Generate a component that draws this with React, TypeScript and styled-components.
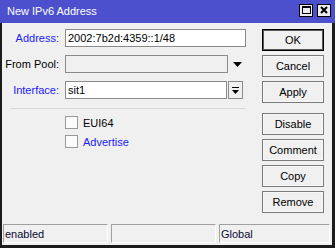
import styled, { createGlobalStyle } from 'styled-components';

const GlobalStyle = createGlobalStyle`
  html, body {
    margin: 0;
    padding: 0;
    background: #f0f0f0;
  }
  body {
    font-family: "Liberation Sans", Arial, sans-serif;
    font-size: 11px;
    color: #000;
  }
`;

const Window = styled.div`
  width: 335px;
  height: 248px;
  display: flex;
  flex-direction: column;
  background: #f0f0f0;
`;

const TitleBar = styled.div`
  height: 23px;
  flex: none;
  display: flex;
  align-items: center;
  padding: 0 4px 0 7px;
  box-sizing: border-box;
  background: #4c50cc;
  color: #fff;
  font-size: 11px;
`;

const Title = styled.span`
  flex: 1;
  margin-top: -1px;
`;

const TitleButtons = styled.div`
  display: flex;
  gap: 4px;
  margin-top: -3px;
`;

const TitleButton = styled.div`
  width: 14px;
  height: 13px;
  box-sizing: border-box;
  border: 1px solid #000;
  background: #ececec;
  display: flex;
  align-items: center;
  justify-content: center;
`;

const Frame = styled.div`
  flex: 1;
  display: flex;
  flex-direction: column;
  border: solid #1c1c1c;
  border-width: 0 3px 3px 2px;
  min-height: 0;
`;

const Body = styled.div`
  display: flex;
  gap: 16px;
  padding: 6px 8px 0 0;
`;

const Form = styled.div`
  width: 244px;
  display: flex;
  flex-direction: column;
  gap: 8px;
`;

const Row = styled.div`
  display: flex;
  align-items: center;
  height: 18px;
`;

const Label = styled.div<{ $blue?: boolean }>`
  width: 57px;
  margin-right: 6px;
  text-align: right;
  white-space: nowrap;
  color: ${(p) => (p.$blue ? '#1a1aff' : '#000')};
`;

const Field = styled.div<{ $disabled?: boolean; $width: number }>`
  width: ${(p) => p.$width}px;
  height: 18px;
  box-sizing: border-box;
  border: 1px solid #8a8a8a;
  background: ${(p) => (p.$disabled ? '#f0f0f0' : '#fff')};
  padding: 0 2px;
  display: flex;
  align-items: center;
  white-space: nowrap;
  overflow: hidden;
`;

const ArrowSlot = styled.div`
  width: 9px;
  margin-left: 5px;
  display: flex;
  align-items: center;
  justify-content: center;
`;

const SmallButton = styled.div`
  width: 15px;
  height: 18px;
  margin-left: 1px;
  box-sizing: border-box;
  border: 1px solid #8a8a8a;
  background: #f0f0f0;
  display: flex;
  align-items: center;
  justify-content: center;
`;

const Separator = styled.div`
  height: 1px;
  background: #d9d9d9;
  margin: 1px 0 0 8px;
`;

const Checks = styled.div`
  display: flex;
  flex-direction: column;
  gap: 6px;
  padding-left: 63px;
  margin-top: -1px;
`;

const CheckRow = styled.div<{ $blue?: boolean }>`
  display: flex;
  align-items: center;
  height: 13px;
  gap: 5px;
  color: ${(p) => (p.$blue ? '#1a1aff' : '#000')};
`;

const Box = styled.div`
  width: 13px;
  height: 13px;
  box-sizing: border-box;
  border: 1px solid #999;
  background: #fbfbfb;
`;

const Buttons = styled.div`
  width: 62px;
  display: flex;
  flex-direction: column;
  gap: 4px;
`;

const Button = styled.div<{ $default?: boolean; $spaced?: boolean }>`
  height: 22px;
  box-sizing: border-box;
  border: 1px solid ${(p) => (p.$default ? '#000' : '#7a7a7a')};
  box-shadow: ${(p) => (p.$default ? 'inset 0 0 0 1px #5a5a5a' : 'inset 0 0 0 1px #f8f8f8')};
  background: #f0f0f0;
  display: flex;
  align-items: center;
  justify-content: center;
  margin-top: ${(p) => (p.$spaced ? '6px' : '0')};
`;

const StatusBar = styled.div`
  margin-top: auto;
  display: grid;
  grid-template-columns: 105px 105px 1fr;
  gap: 3px;
  padding: 0 2px 2px 1px;
`;

const Panel = styled.div`
  height: 19px;
  box-sizing: border-box;
  border: 1px solid;
  border-color: #a0a0a0 #fff #fff #a0a0a0;
  padding-left: 1px;
  display: flex;
  align-items: center;
  color: #0a0a30;
`;

const DownTriangle = () => (
  <svg width="9" height="5" viewBox="0 0 9 5">
    <path d="M0 0h9L4.5 5z" fill="#000" />
  </svg>
);

const BarArrow = () => (
  <svg width="7" height="7" viewBox="0 0 7 7">
    <rect x="0" y="0" width="7" height="1" fill="#000" />
    <path d="M0 3h7L3.5 7z" fill="#000" />
  </svg>
);

function App() {
  return (
    <>
      <GlobalStyle />
      <Window>
        <TitleBar>
          <Title>New IPv6 Address</Title>
          <TitleButtons>
            <TitleButton>
              <svg width="9" height="8" viewBox="0 0 9 8">
                <rect x="0.5" y="0.5" width="8" height="7" fill="none" stroke="#000" />
                <rect x="0" y="0" width="9" height="2" fill="#000" />
              </svg>
            </TitleButton>
            <TitleButton>
              <svg width="8" height="8" viewBox="0 0 8 8">
                <path d="M1 1L7 7M7 1L1 7" stroke="#000" strokeWidth="2" />
              </svg>
            </TitleButton>
          </TitleButtons>
        </TitleBar>
        <Frame>
          <Body>
            <Form>
              <Row>
                <Label $blue>Address:</Label>
                <Field $width={181}>2002:7b2d:4359::1/48</Field>
              </Row>
              <Row>
                <Label>From Pool:</Label>
                <Field $width={163} $disabled />
                <ArrowSlot>
                  <DownTriangle />
                </ArrowSlot>
              </Row>
              <Row>
                <Label $blue>Interface:</Label>
                <Field $width={162}>sit1</Field>
                <SmallButton>
                  <BarArrow />
                </SmallButton>
              </Row>
              <Separator />
              <Checks>
                <CheckRow>
                  <Box />
                  EUI64
                </CheckRow>
                <CheckRow $blue>
                  <Box />
                  Advertise
                </CheckRow>
              </Checks>
            </Form>
            <Buttons>
              <Button $default>OK</Button>
              <Button>Cancel</Button>
              <Button>Apply</Button>
              <Button $spaced>Disable</Button>
              <Button>Comment</Button>
              <Button>Copy</Button>
              <Button>Remove</Button>
            </Buttons>
          </Body>
          <StatusBar>
            <Panel>enabled</Panel>
            <Panel />
            <Panel>Global</Panel>
          </StatusBar>
        </Frame>
      </Window>
    </>
  );
}

export default App;
